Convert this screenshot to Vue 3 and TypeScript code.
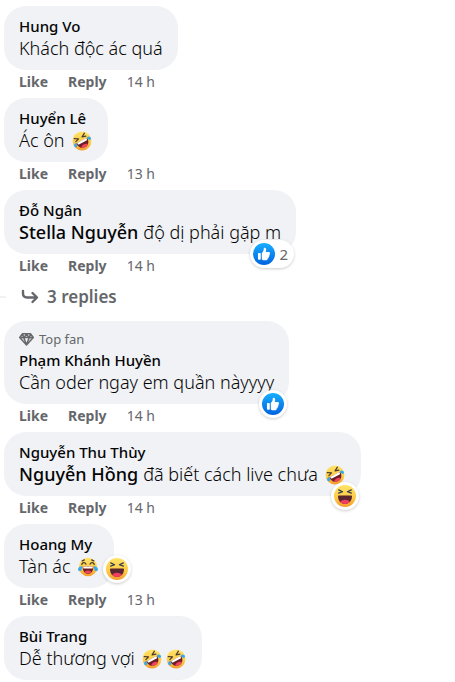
<script setup lang="ts">
type Emoji = 'rofl' | 'joy'
type Reaction = 'like' | 'haha'

interface Comment {
  id: number
  author: string
  mention?: string
  text: string
  emojis?: Emoji[]
  age?: string
  topFan?: boolean
  reaction?: Reaction
  count?: number
  beside?: boolean
  replies?: number
}

const comments: Comment[] = [
  { id: 1, author: 'Hung Vo', text: 'Khách độc ác quá', age: '14 h' },
  { id: 2, author: 'Huyển Lê', text: 'Ác ôn', emojis: ['rofl'], age: '13 h' },
  { id: 3, author: 'Đỗ Ngân', mention: 'Stella Nguyễn', text: 'độ dị phải gặp m', age: '14 h', reaction: 'like', count: 2, replies: 3 },
  { id: 4, author: 'Phạm Khánh Huyền', text: 'Cần oder ngay em quần nàyyyy', age: '14 h', topFan: true, reaction: 'like' },
  { id: 5, author: 'Nguyễn Thu Thùy', mention: 'Nguyễn Hồng', text: 'đã biết cách live chưa', emojis: ['rofl'], age: '14 h', reaction: 'haha' },
  { id: 6, author: 'Hoang My', text: 'Tàn ác', emojis: ['joy'], age: '13 h', reaction: 'haha', beside: true },
  { id: 7, author: 'Bùi Trang', text: 'Dễ thương vợi', emojis: ['rofl', 'rofl'] },
]
</script>

<template>
  <svg class="sprite" aria-hidden="true">
    <defs>
      <linearGradient id="face" x1="0" y1="0" x2="0" y2="1">
        <stop offset="0" stop-color="#ffe367" />
        <stop offset="0.6" stop-color="#fdcb45" />
        <stop offset="1" stop-color="#f49a2c" />
      </linearGradient>
      <linearGradient id="blue" x1="0" y1="0" x2="0" y2="1">
        <stop offset="0" stop-color="#18afff" />
        <stop offset="1" stop-color="#0062df" />
      </linearGradient>
      <symbol id="rofl" viewBox="0 0 20 20">
        <circle cx="10" cy="10" r="9.4" fill="url(#face)" />
        <g transform="rotate(-28 10 10)">
          <path d="M4.2 4.2 8 6.4 4.3 7.6M15.8 4.2 12 6.4l3.7 1.2" fill="none" stroke="#4a3b32" stroke-width="1.2" stroke-linecap="round" stroke-linejoin="round" />
          <path d="M3.9 9.5h12.2c0 4.6-2.4 7.4-6.1 7.4s-6.1-2.8-6.1-7.4Z" fill="#6e1c26" />
          <path d="M4.8 9.5h10.4v1.2q0 .9-.9.9H5.7q-.9 0-.9-.9Z" fill="#fff" />
          <path d="M6.2 15.4c1.7-2.2 5.9-2.2 7.6 0-1.8 2-5.8 2-7.6 0Z" fill="#f0445c" />
          <path d="M3.9 8.8C1.500 8.700.400 10.200.800 11.800c.5 1.500 2.600 1.400 3-.5ZM16.100 8.800c2.400-.1 3.500 1.400 3.100 3-.5 1.500-2.600 1.400-3-.5Z" fill="#35a9eb" />
        </g>
      </symbol>
      <symbol id="joy" viewBox="0 0 20 20">
        <circle cx="10" cy="10" r="9.2" fill="url(#face)" />
        <path d="M3.7 7.5c.8-2.4 3.4-2.4 4.3-.3M12 7.2c.9-2.1 3.5-2.1 4.3.3M4.2 3.9l2.2-1M15.8 3.9l-2.2-1" fill="none" stroke="#4a3b32" stroke-width="1.2" stroke-linecap="round" />
        <path d="M4.6 9.4h10.8c0 4.5-2.1 7.3-5.4 7.3s-5.4-2.8-5.4-7.3Z" fill="#6e1c26" />
        <path d="M5.2 9.4h9.6v1.3q0 .9-.9.9H6.1q-.9 0-.9-.9Z" fill="#fff" />
        <path d="M6.7 15c1.5-1.9 5.1-1.9 6.6 0-1.6 2.1-5 2.1-6.6 0Z" fill="#f0445c" />
        <path d="M4.1 9.3C1.5 9.1-.4 11 .2 13.1c.6 1.7 3 1.6 3.5-.5ZM15.9 9.3c2.6-.2 4.5 1.7 3.9 3.8-.6 1.7-3 1.6-3.5-.5Z" fill="#35a9eb" />
      </symbol>
      <symbol id="haha" viewBox="0 0 22 22">
        <circle cx="11" cy="11" r="11" fill="url(#face)" />
        <path d="M4.7 4.9 8.6 6.8 4.6 8.1M17.3 4.9l-3.9 1.9 4 1.3" fill="none" stroke="#303b4c" stroke-width="1.2" stroke-linecap="round" stroke-linejoin="round" />
        <path d="M4 11.3c0-.7.4-.9 1-.9h12c.6 0 1 .2 1 .9 0 4.4-2.7 7.6-7 7.6s-7-3.2-7-7.6Z" fill="#5a2731" />
        <path d="M6.2 17c1.6-3.1 8-3.1 9.6 0-2.4 2.5-7.2 2.5-9.6 0Z" fill="#f23c60" />
      </symbol>
      <symbol id="like" viewBox="0 0 16 16">
        <circle cx="8" cy="8" r="8" fill="url(#blue)" />
        <path d="M12.16 7.34c.13.13.2.3.2.5 0 .42-.24.77-.6.9.14.14.22.32.22.53 0 .41-.3.75-.68.86.08.12.12.27.12.43 0 .5-.4.86-.93.91.04.1.06.2.06.31 0 .5-.43.83-.95.83H8.3c-.7 0-1.3-.3-1.9-.65V7.4c.5-.7 1.2-1.4 1.35-2.25.09-.5-.13-1.5.6-1.65.8-.16 1.25.6 1.25 1.35 0 .7-.2 1.25-.38 1.75h2.15c.5 0 .9.25.9.6 0 .06-.04.1-.11.14ZM3.6 7.9c0-.37.23-.6.55-.6h.95c.32 0 .55.23.55.6v3.7c0 .37-.23.6-.55.6h-.95c-.32 0-.55-.23-.55-.6Z" fill="#fff" />
      </symbol>
    </defs>
  </svg>

  <main class="comments">
    <article v-for="c in comments" :key="c.id" class="comment">
      <div class="bubble">
        <div v-if="c.topFan" class="badge">
          <svg class="gem" viewBox="0 0 15 13" aria-hidden="true">
            <path d="M3.3.8h8.4l2.6 3.7-6.8 7.6L.7 4.5ZM.9 4.5h13.2M3.5 1l1.4 3.5 2.6-3.4 2.6 3.4L11.5 1M4.9 4.7l2.6 7 2.6-7" fill="#65676b" fill-opacity="0.25" stroke="currentColor" stroke-width="1.4" stroke-linejoin="round" />
          </svg>
          <span>Top fan</span>
        </div>
        <a class="author" href="#">{{ c.author }}</a>
        <p class="body">
          <a v-if="c.mention" class="mention" href="#">{{ c.mention }}</a>
          <span>{{ c.text }}</span>
          <span v-if="c.emojis" class="emojis">
            <svg v-for="(e, i) in c.emojis" :key="i" class="emoji" aria-hidden="true"><use :href="'#' + e" /></svg>
          </span>
        </p>
        <button v-if="c.reaction" type="button" class="reaction" :class="{ beside: c.beside }" :aria-label="c.reaction">
          <svg class="face" aria-hidden="true"><use :href="'#' + c.reaction" /></svg>
          <span v-if="c.count" class="count">{{ c.count }}</span>
        </button>
      </div>
      <div v-if="c.age" class="meta">
        <button type="button" class="action">Like</button>
        <button type="button" class="action">Reply</button>
        <a class="age" href="#">{{ c.age }}</a>
      </div>
      <div v-if="c.replies" class="thread">
        <button type="button" class="replies">
          <svg class="arrow" viewBox="0 0 18 16" aria-hidden="true">
            <path d="M2 2v2.500Q2 8.500 6 8.500h9.500M11.500 4l4.500 4.500-4.500 4.500" fill="none" stroke="currentColor" stroke-width="2.400" stroke-linecap="round" stroke-linejoin="round" />
          </svg>
          <span>{{ c.replies }} replies</span>
        </button>
      </div>
    </article>
  </main>
</template>

<style>
body {
  background: #fff;
}
</style>

<style scoped>
.sprite {
  position: absolute;
  width: 0;
  height: 0;
}

.comments {
  padding: 6px 4px 0;
  font-family: "Noto Sans", "Open Sans", sans-serif;
  color: #050505;
}

a {
  color: inherit;
  text-decoration: none;
}

button {
  padding: 0;
  border: 0;
  background: none;
  color: inherit;
  font: inherit;
  cursor: pointer;
}

.comment {
  display: flex;
  flex-direction: column;
  align-items: flex-start;
}

.bubble {
  position: relative;
  padding: 10px 15px;
  border-radius: 22px;
  background: #f0f2f5;
}

.badge {
  display: flex;
  align-items: center;
  gap: 5px;
  height: 16px;
  margin-bottom: 3px;
  color: #65676b;
  font-size: 13px;
  line-height: 16px;
}

.gem {
  width: 15px;
  height: 13px;
}

.author {
  display: block;
  font-size: 15px;
  font-weight: 500;
  line-height: 20px;
}

.body {
  display: flex;
  align-items: center;
  gap: 5px;
  margin: 0;
  font-size: 18px;
  font-weight: 350;
  line-height: 24px;
  white-space: nowrap;
}

.mention {
  font-weight: 500;
}

.emojis {
  display: flex;
  gap: 4px;
  padding: 2px 1px 0 2px;
}

.emoji {
  width: 20px;
  height: 20px;
}

.reaction {
  position: absolute;
  right: 2px;
  bottom: -14px;
  display: flex;
  align-items: center;
  gap: 5px;
  padding: 3px;
  border-radius: 14px;
  background: #fff;
  box-shadow: 0 1px 3px rgba(0, 0, 0, 0.2);
}

.reaction.beside {
  right: -17px;
  bottom: 5px;
}

.face {
  width: 22px;
  height: 22px;
}

.count {
  padding-right: 3px;
  color: #65676b;
  font-size: 15px;
  line-height: 20px;
}

.meta {
  display: flex;
  gap: 20px;
  padding: 0 15px 4px;
  color: #65676b;
  font-size: 14px;
  line-height: 24px;
}

.action {
  font-weight: 700;
}

.thread {
  display: flex;
  align-items: center;
  gap: 15px;
  height: 39px;
  margin-left: -4px;
  padding-bottom: 10px;
  box-sizing: border-box;
}

.thread::before {
  width: 6px;
  height: 2px;
  background: #f0f2f5;
  content: "";
}

.replies {
  display: flex;
  align-items: center;
  gap: 8px;
  color: #65676b;
  font-size: 17px;
  font-weight: 600;
  line-height: 24px;
}

.arrow {
  width: 18px;
  height: 16px;
}
</style>
